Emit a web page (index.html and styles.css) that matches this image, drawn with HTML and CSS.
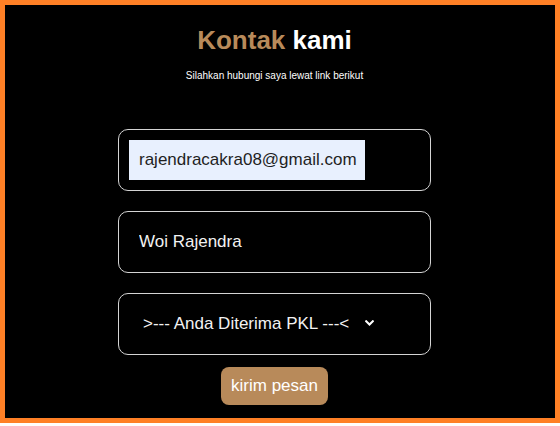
FILE: index.html
```html
<!DOCTYPE html>
<html lang="id">
<head>
<meta charset="utf-8">
<title>Kontak kami</title>
<link rel="stylesheet" href="styles.css">
</head>
<body>
<section class="contact">
  <h2 class="title"><span class="accent">Kontak</span> kami</h2>
  <p class="subtitle">Silahkan hubungi saya lewat link berikut</p>
  <form class="form">
    <div class="field">
      <input class="input input-autofill" type="email" value="rajendracakra08@gmail.com">
    </div>
    <div class="field">
      <input class="input" type="text" value="Woi Rajendra">
    </div>
    <div class="field">
      <div class="select">
        <span class="select-text">&gt;--- Anda Diterima PKL ---&lt;</span>
        <svg class="chevron" width="9" height="6" viewBox="0 0 9 6" aria-hidden="true"><path d="M1.2 1.2 L4.5 4.5 L7.8 1.2" fill="none" stroke="#ffffff" stroke-width="2" stroke-linecap="square"/></svg>
      </div>
    </div>
    <button class="submit" type="button">kirim pesan</button>
  </form>
</section>
</body>
</html>
```
FILE: styles.css
```css
html, body {
  margin: 0;
  padding: 0;
  background: #ffffff;
}
body {
  font-family: "Liberation Sans", Arial, sans-serif;
}
.contact {
  background: #000000;
  border: 5px solid #ff8026;
  padding: 20px 11px 0 0;
  box-sizing: border-box;
  height: 423px;
  display: flex;
  flex-direction: column;
  align-items: center;
}
.title {
  margin: 0;
  font-size: 26px;
  line-height: 30px;
  font-weight: bold;
  color: #ffffff;
}
.accent {
  color: #b88a5a;
}
.subtitle {
  margin: 15px 0 0;
  font-size: 10px;
  line-height: 12px;
  color: #ffffff;
}
.form {
  margin-top: 47px;
  display: flex;
  flex-direction: column;
  align-items: center;
  gap: 20px;
}
.field {
  width: 313px;
  height: 62px;
  box-sizing: border-box;
  border: 1px solid #d4d4d4;
  border-radius: 10px;
  padding: 10px;
  display: flex;
  align-items: center;
}
.input {
  width: 236px;
  height: 40px;
  box-sizing: border-box;
  border: none;
  outline: none;
  padding: 0 0 0 10px;
  margin: 0;
  font-family: "Liberation Sans", Arial, sans-serif;
  font-size: 17px;
  background: transparent;
  color: #f2f2f2;
}
.input-autofill {
  background: #e8f0fe;
  color: #1f1f1f;
}
.select {
  display: flex;
  align-items: center;
  padding-left: 14px;
  height: 40px;
  color: #f2f2f2;
  font-size: 17px;
}
.chevron {
  margin-left: 16px;
  margin-top: -3px;
}
.submit {
  margin-top: -8px;
  padding: 10px 10px;
  border: none;
  border-radius: 8px;
  background: #b88a5a;
  color: #ffffff;
  font-family: "Liberation Sans", Arial, sans-serif;
  font-size: 17px;
  line-height: 18px;
}
```
